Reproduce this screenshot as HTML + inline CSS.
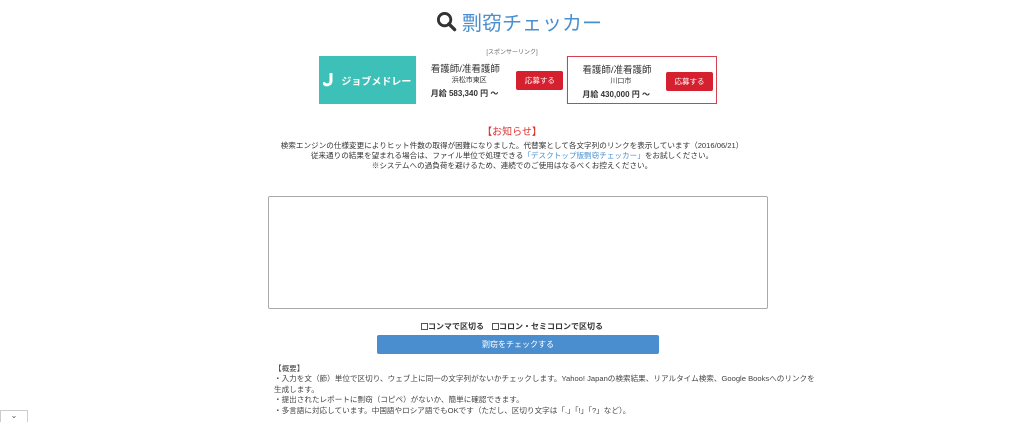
<!DOCTYPE html>
<html><head><meta charset="utf-8"><style>
*{margin:0;padding:0;box-sizing:border-box}
body{width:1024px;height:422px;overflow:hidden;background:#fff;font-family:"Liberation Sans","Noto Sans CJK JP",sans-serif;color:#333;position:relative}
.abs{position:absolute}
.title{left:436px;top:7px;font-size:20px;color:#4a8fd0;display:flex;align-items:center;gap:5px}
.sp{left:0;width:1024px;top:47px;text-align:center;font-size:6px;color:#666}
.ad{left:319px;top:56px;width:398px;height:48px;display:flex;background:#f6f6f6}
.logo{width:97px;background:#3cc0b8;color:#fff;font-size:10px;font-weight:bold;display:flex;align-items:center;justify-content:center;gap:6px}
.card{width:150px;position:relative;background:#fff}
.card .t{position:absolute;left:14px;top:5px;font-size:9.5px}
.card .l{position:absolute;left:0;width:105px;text-align:center;top:19px;font-size:7px}
.card .p{position:absolute;left:14px;top:32px;font-size:8px;font-weight:bold}
.btn{position:absolute;right:3px;top:15px;width:47px;height:19px;background:#d4202f;color:#fff;font-size:7.5px;border-radius:2px;display:flex;align-items:center;justify-content:center}
.info{left:0;width:1024px;top:127px;text-align:center;font-size:7.6px;line-height:10px}
textarea{position:absolute;left:268px;top:196px;width:500px;height:113px;border:1px solid #aaa;border-radius:2px;resize:none}
.opts{left:0;width:1024px;top:321px;text-align:center;font-size:8px;font-weight:bold}
.cb{display:inline-block;width:7px;height:7px;border:1px solid #555;vertical-align:-1px}
.go{left:377px;top:335px;width:282px;height:19px;background:#4a8ed0;color:#fff;font-size:8px;border-radius:2px;display:flex;align-items:center;justify-content:center}
.desc{left:274px;top:364px;font-size:7.6px;line-height:10.4px;width:570px;color:#444;font-weight:normal}
</style></head><body>
<div class="abs title"><svg width="21" height="21" viewBox="0 0 22 22"><circle cx="9" cy="9" r="6.5" fill="none" stroke="#333" stroke-width="3"/><path d="M13.5 13.5L19.5 19.5" stroke="#333" stroke-width="3.5" stroke-linecap="round"/></svg><span>剽窃チェッカー</span></div>
<div class="abs sp">[スポンサーリンク]</div>
<div class="abs ad">
 <div class="logo"><svg width="12" height="14" viewBox="0 0 12 14"><path d="M8 1v7a4 4 0 0 1-7 2.5" fill="none" stroke="#fff" stroke-width="3" stroke-linecap="round"/></svg>ジョブメドレー</div>
 <div class="card" style="margin-left:1px"><div class="t">看護師/准看護師</div><div class="l">浜松市東区</div><div class="p">月給 583,340 円 〜</div><div class="btn">応募する</div></div>
 <div class="card" style="border:1.5px solid #d4404f;margin-left:1px"><div class="t">看護師/准看護師</div><div class="l">川口市</div><div class="p">月給 430,000 円 〜</div><div class="btn">応募する</div></div>
</div>
<div class="abs info"><div style="color:#e03030;font-size:10px;line-height:11px;margin-bottom:3px">【お知らせ】</div>
検索エンジンの仕様変更によりヒット件数の取得が困難になりました。代替案として各文字列のリンクを表示しています（2016/06/21）<br>
従来通りの結果を望まれる場合は、ファイル単位で処理できる<span style="color:#4a8fd0">「デスクトップ版剽窃チェッカー」</span>をお試しください。<br>
※システムへの過負荷を避けるため、連続でのご使用はなるべくお控えください。</div>
<textarea></textarea>
<div class="abs opts"><span class="cb"></span>コンマで区切る　<span class="cb"></span>コロン・セミコロンで区切る</div>
<div class="abs go">剽窃をチェックする</div>
<div class="abs desc">【概要】<br>・入力を文（節）単位で区切り、ウェブ上に同一の文字列がないかチェックします。Yahoo! Japanの検索結果、リアルタイム検索、Google Booksへのリンクを<br>生成します。<br>・提出されたレポートに剽窃（コピペ）がないか、簡単に確認できます。<br>・多言語に対応しています。中国語やロシア語でもOKです（ただし、区切り文字は「.」「!」「?」など）。</div>
<div class="abs" style="left:0;top:410px;width:28px;height:12px;border:1px solid #ccc;border-bottom:none;background:#fff;font-size:8px;text-align:center;color:#555">⌄</div>
</body></html>
